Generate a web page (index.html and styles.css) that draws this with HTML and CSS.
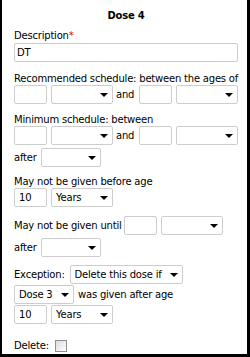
FILE: index.html
```html
<!DOCTYPE html>
<html lang="en">
<head>
  <meta charset="UTF-8">
  <title>Dose 4</title>
  <link rel="stylesheet" href="styles.css">
</head>
<body>
  <div class="panel">
    <h2 class="title">Dose 4</h2>

    <div class="field f-desc">
      <label for="desc">Description<span class="req">*</span></label>
      <input type="text" id="desc" class="txt txt-wide" value="DT">
    </div>

    <div class="field f-rec">
      <label>Recommended schedule: between the ages of</label>
      <div class="row">
        <input type="text" class="txt txt-num">
        <span class="sel sel-unit"><select></select></span>
        <span class="word">and</span>
        <input type="text" class="txt txt-num">
        <span class="sel sel-unit"><select></select></span>
      </div>
    </div>

    <div class="field f-min">
      <label>Minimum schedule: between</label>
      <div class="row">
        <input type="text" class="txt txt-num">
        <span class="sel sel-unit"><select></select></span>
        <span class="word">and</span>
        <input type="text" class="txt txt-num">
        <span class="sel sel-unit"><select></select></span>
      </div>
      <div class="row row-after">
        <span class="word-lead">after</span>
        <span class="sel sel-after"><select></select></span>
      </div>
    </div>

    <div class="field f-before">
      <label>May not be given before age</label>
      <div class="row">
        <input type="text" class="txt txt-num" value="10">
        <span class="sel sel-unit"><select><option>Years</option></select></span>
      </div>
    </div>

    <div class="field f-until">
      <div class="row">
        <span class="word-lead">May not be given until</span>
        <input type="text" class="txt txt-num">
        <span class="sel sel-unit"><select></select></span>
      </div>
      <div class="row row-after">
        <span class="word-lead">after</span>
        <span class="sel sel-after"><select></select></span>
      </div>
    </div>

    <div class="field f-exc">
      <div class="row">
        <span class="word-lead">Exception:</span>
        <span class="sel sel-exc"><select><option>Delete this dose if</option></select></span>
      </div>
      <div class="row row-tight">
        <span class="sel sel-dose"><select><option>Dose 3</option></select></span>
        <span class="word-trail">was given after age</span>
      </div>
      <div class="row row-tight">
        <input type="text" class="txt txt-num" value="10">
        <span class="sel sel-unit"><select><option>Years</option></select></span>
      </div>
    </div>

    <div class="field f-del">
      <div class="row">
        <span class="word-lead">Delete:</span>
        <input type="checkbox" class="chk">
      </div>
    </div>
  </div>
</body>
</html>
```

FILE: styles.css
```css
body {
  margin: 0;
  padding: 0;
  font-family: "DejaVu Sans", Tahoma, sans-serif;
  font-size: 10px;
  letter-spacing: -0.2px;
  color: #000000;
  background-color: #FFFFFF;
}
.panel {
  width: 250px;
  height: 357px;
  box-sizing: border-box;
  border-left: 2px solid #000000;
  border-right: 3px solid #000000;
  border-bottom: 3px solid #000000;
  padding: 9px 9px 0 12px;
  overflow: hidden;
}
.title {
  margin: 0;
  font-size: 10px;
  font-weight: 700;
  line-height: 13px;
  text-align: center;
}
.field label {
  display: block;
  line-height: 13px;
  white-space: nowrap;
}
.req {
  color: #E00000;
}
.row {
  display: flex;
  align-items: center;
  height: 19px;
  white-space: nowrap;
}
.txt {
  height: 19px;
  box-sizing: border-box;
  border: 1px solid #CDCDCD;
  border-radius: 2px;
  padding: 0 4px;
  margin: 0;
  font-family: inherit;
  font-size: 10px;
  letter-spacing: inherit;
  color: #000000;
  outline: none;
}
.txt-wide {
  display: block;
  width: 224px;
  margin-top: 1px;
  padding: 0 2px;
}
.txt-num {
  width: 33px;
}
.sel {
  position: relative;
  display: inline-block;
  height: 19px;
  margin-left: 4px;
  flex: none;
}
.sel select {
  appearance: none;
  -webkit-appearance: none;
  width: 100%;
  height: 19px;
  box-sizing: border-box;
  border: 1px solid #CDCDCD;
  border-radius: 2px;
  background-color: #FFFFFF;
  padding: 0 4px;
  margin: 0;
  font-family: inherit;
  font-size: 10px;
  letter-spacing: inherit;
  color: #000000;
  outline: none;
}
.sel::after {
  content: "";
  position: absolute;
  right: 5px;
  top: 8px;
  border-left: 4px solid transparent;
  border-right: 4px solid transparent;
  border-top: 4px solid #000000;
}
.sel-unit { width: 62px; }
.sel-after { width: 60px; }
.sel-exc { width: 113px; }
.sel-dose { width: 60px; margin-left: 0; }
.word {
  margin: 0 5px 0 3px;
}
.word-trail {
  margin-left: 4px;
}
.f-desc { margin-top: 7px; }
.f-rec { margin-top: 10px; }
.f-min { margin-top: 9px; }
.row-after { margin-top: 3px; }
.f-before { margin-top: 8px; }
.f-until { margin-top: 9px; }
.f-until .txt-num { margin-left: 2px; }
.f-exc { margin-top: 8px; }
.f-exc .row:first-child .sel { margin-left: 5px; }
.row-tight { margin-top: 1px; }
.f-del { margin-top: 12px; }
.chk {
  appearance: none;
  -webkit-appearance: none;
  width: 12px;
  height: 12px;
  margin: 0 0 0 6px;
  box-sizing: border-box;
  border: 1px solid #8E8F8F;
  background: linear-gradient(135deg, #DCDCDC, #FFFFFF);
}
```
